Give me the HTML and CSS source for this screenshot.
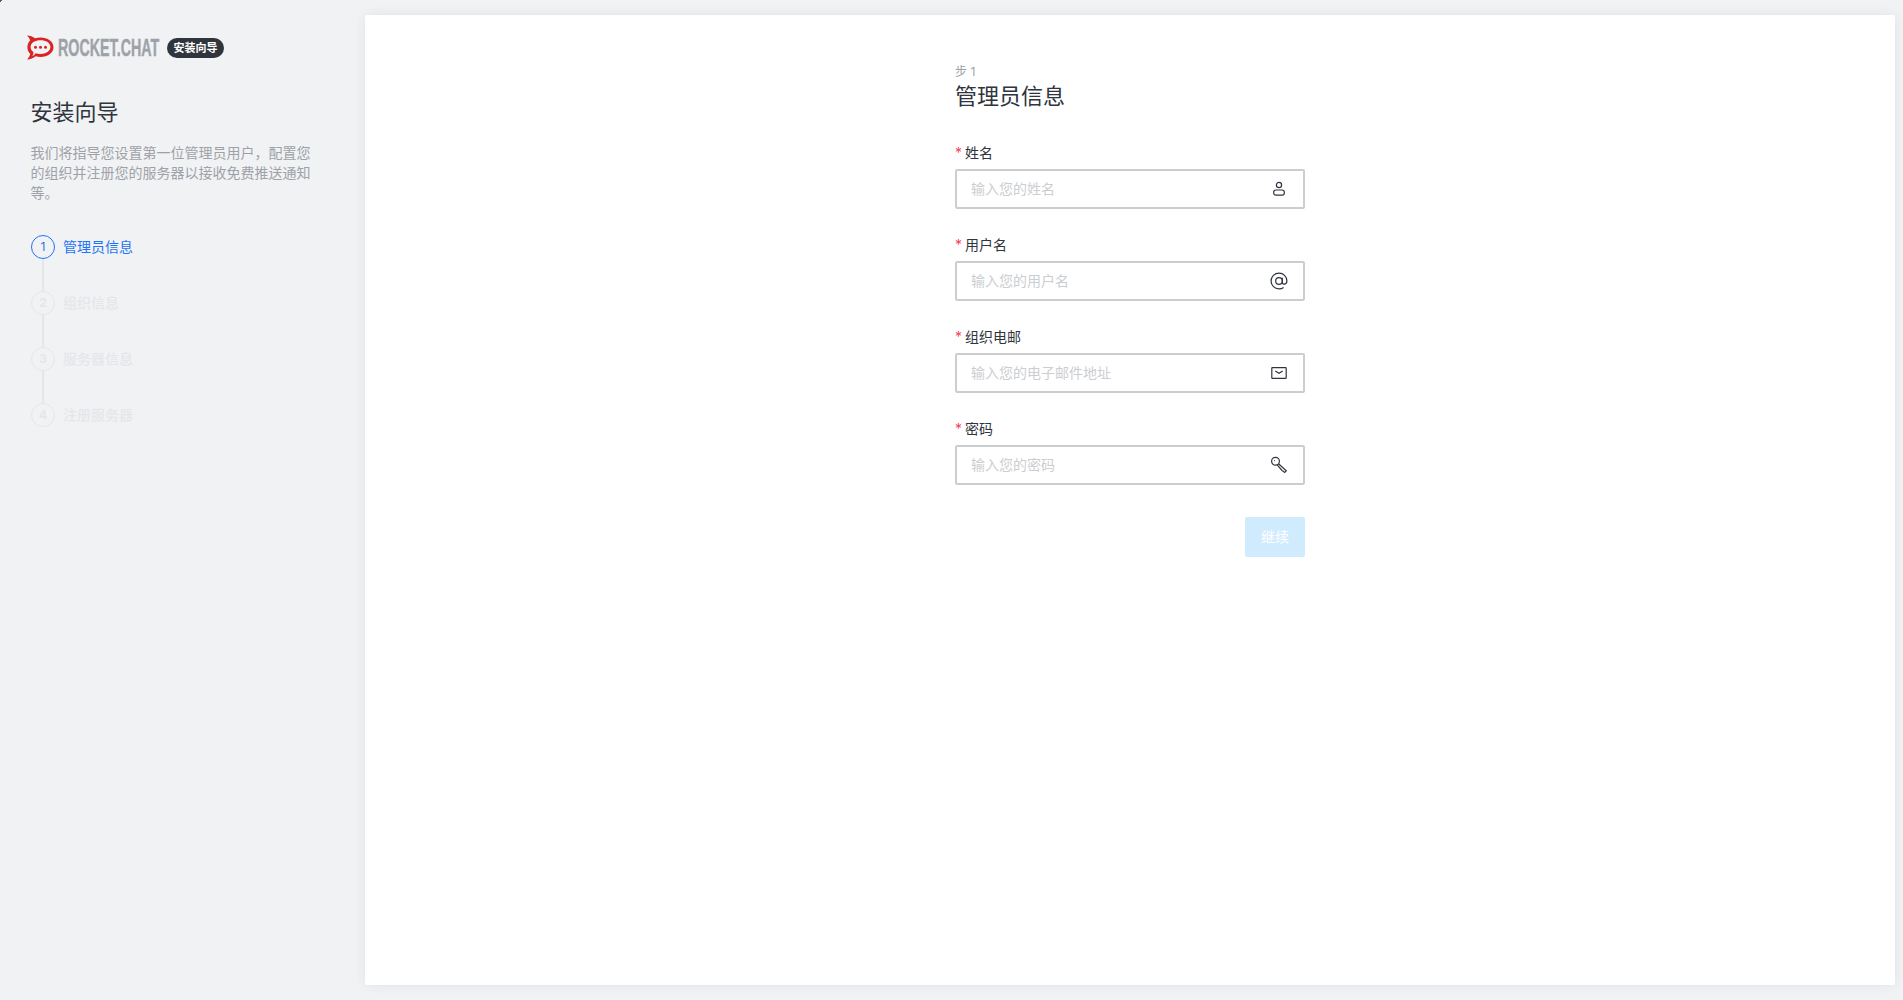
FILE: index.html
```html
<!DOCTYPE html>
<html lang="zh-CN">
<head>
<meta charset="utf-8">
<title>安装向导</title>
<link rel="stylesheet" href="styles.css">
</head>
<body>
<aside class="sidebar">
  <div class="brand">
    <svg class="logo-mark" viewBox="0 0 28 25" width="28" height="25" aria-hidden="true">
      <path class="logo-red" fill-rule="evenodd" d="M1 .5C4 .6 7 1.600 9 3.300 10.800 2.700 12.600 2.400 14.500 2.400 21.500 2.400 27.500 6.300 27.500 12.200 27.500 18 21.500 21.900 14.500 21.900 12.800 21.900 11.200 21.700 9.700 21.200 7.500 23 4.500 24.300 1 24.500 2.600 22.700 4 20.800 4.200 18.700 2.300 17 1.400 14.800 1.400 12.200 1.400 9.500 2.400 7.300 4.200 5.600 3.900 4 2.700 2.100 1 .5ZM14.500 5.300C9 5.300 4.600 8 4.600 12.100 4.600 14.400 5.800 16 7.500 17.200 7.500 18.600 7 20 6.300 21 7.500 20.600 8.600 19.600 9.600 18.200 11 18.700 12.700 19 14.500 19 20 19 24.400 16.200 24.400 12.100 24.400 8 20 5.300 14.500 5.300Z"/>
      <circle class="logo-red" cx="9.500" cy="12.200" r="1.500"/>
      <circle class="logo-red" cx="14.500" cy="12.200" r="1.500"/>
      <circle class="logo-red" cx="19.500" cy="12.200" r="1.500"/>
    </svg>
    <span class="wordmark"><span class="wordmark-text">ROCKET.CHAT</span></span>
    <span class="badge">安装向导</span>
  </div>
  <div class="intro">
    <h1 class="intro-title">安装向导</h1>
    <p class="intro-text">我们将指导您设置第一位管理员用户，配置您的组织并注册您的服务器以接收免费推送通知等。</p>
  </div>
  <ol class="steps">
    <li class="step step-active"><span class="step-num">1</span><span class="step-label">管理员信息</span></li>
    <li class="step"><span class="step-num">2</span><span class="step-label">组织信息</span></li>
    <li class="step"><span class="step-num">3</span><span class="step-label">服务器信息</span></li>
    <li class="step"><span class="step-num">4</span><span class="step-label">注册服务器</span></li>
  </ol>
</aside>
<main class="card">
  <form class="form">
    <div class="form-step">步 1</div>
    <h2 class="form-title">管理员信息</h2>
    <div class="field">
      <label class="field-label"><span class="req">*</span>姓名</label>
      <div class="input-box">
        <input class="input" type="text" placeholder="输入您的姓名">
        <svg class="icon" viewBox="0 0 20 20" width="20" height="20" aria-hidden="true"><circle cx="10" cy="6" r="2.600"/><rect x="4.700" y="11" width="10.600" height="5.200" rx="2.100"/></svg>
      </div>
    </div>
    <div class="field">
      <label class="field-label"><span class="req">*</span>用户名</label>
      <div class="input-box">
        <input class="input" type="text" placeholder="输入您的用户名">
        <svg class="icon" viewBox="0 0 20 20" width="20" height="20" aria-hidden="true"><circle cx="10" cy="10" r="3.300"/><path d="M13.300 6.700V11.200C13.300 14 17.900 14 17.900 10 17.900 5.500 14.300 2.100 10 2.100A7.900 7.900 0 0 0 10 17.900C11.800 17.900 13.300 17.400 14.600 16.500"/></svg>
      </div>
    </div>
    <div class="field">
      <label class="field-label"><span class="req">*</span>组织电邮</label>
      <div class="input-box">
        <input class="input" type="text" placeholder="输入您的电子邮件地址">
        <svg class="icon" viewBox="0 0 20 20" width="20" height="20" aria-hidden="true"><rect x="2.800" y="4.700" width="14.400" height="10.600" rx=".6"/><path d="M6.300 8 10 10.300 13.700 8"/></svg>
      </div>
    </div>
    <div class="field">
      <label class="field-label"><span class="req">*</span>密码</label>
      <div class="input-box">
        <input class="input" type="text" placeholder="输入您的密码">
        <svg class="icon" viewBox="0 0 20 20" width="20" height="20" aria-hidden="true"><circle cx="6.500" cy="6.300" r="3.900"/><path d="M9.500 8.800 17.300 15.800 15.700 17.400 14.200 16.200 13 15.500 8.400 10.200"/><path d="M5.200 5.600H5.900"/></svg>
      </div>
    </div>
    <div class="actions">
      <button class="submit" type="button">继续</button>
    </div>
  </form>
</main>
</body>
</html>
```
FILE: styles.css
```css
* { box-sizing: border-box; }
html, body { height: 100%; }
body {
  margin: 0;
  height: 1000px;
  display: flex;
  overflow: hidden;
  background: #f1f2f4;
  color: #2f343d;
  font-family: Inter, "Noto Sans CJK SC", sans-serif;
  font-size: 14px;
}
body::before {
  content: "";
  position: absolute;
  left: 0;
  top: 0;
  width: 3px;
  height: 3px;
  background: linear-gradient(135deg, #55585e 50%, transparent 50%);
}
.sidebar {
  width: 365px;
  flex: none;
  padding: 35px 0 0 26px;
}
.brand {
  display: flex;
  align-items: center;
  height: 25px;
}
.logo-mark { display: block; flex: none; }
.logo-red { fill: #db2323; }
.wordmark {
  display: block;
  width: 101px;
  margin-left: 4px;
  height: 25px;
  line-height: 25px;
  overflow: visible;
}
.wordmark-text {
  display: inline-block;
  font-family: "Liberation Sans", sans-serif;
  font-weight: 700;
  font-size: 24px;
  color: #9ea2a8;
  white-space: nowrap;
  -webkit-text-stroke: .4px #9ea2a8;
  transform: scaleX(.595);
  transform-origin: left center;
}
.badge {
  margin-left: 8px;
  width: 57px;
  height: 20px;
  border-radius: 10px;
  background: #2f343d;
  color: #fff;
  font-size: 11px;
  font-weight: 700;
  line-height: 20px;
  text-align: center;
  white-space: nowrap;
}
.intro {
  margin-top: 36px;
  padding-left: 4.500px;
  width: 290px;
}
.intro-title {
  margin: 0;
  font-size: 22px;
  line-height: 32px;
  font-weight: 400;
  color: #2f343d;
}
.intro-text {
  margin: 15px 0 0;
  line-height: 20px;
  color: #9ea2a8;
  width: 284px;
}
.steps {
  list-style: none;
  margin: 32px 0 0;
  padding: 0 0 0 5px;
}
.step {
  position: relative;
  display: flex;
  align-items: center;
  gap: 8px;
  height: 24px;
  margin-bottom: 32px;
  color: #e4e7ea;
  font-weight: 500;
}
.step:not(:last-child)::after {
  content: "";
  position: absolute;
  left: 11px;
  top: 24px;
  width: 2px;
  height: 32px;
  background: #e4e7ea;
}
.step-num {
  width: 24px;
  height: 24px;
  border-radius: 50%;
  border: 1px solid #e4e7ea;
  font-size: 12px;
  font-weight: 700;
  line-height: 22px;
  text-align: center;
  flex: none;
}
.step-label { padding-bottom: 2px; }
.step-active { color: #1d74f5; font-weight: 400; }
.step-active .step-num { border-color: #1d74f5; font-weight: 400; }
.card {
  flex: 1;
  margin: 15px 8px 15px 0;
  background: #fff;
  border-radius: 2px;
  box-shadow: 0 0 12px rgba(47, 52, 61, .08);
  display: flex;
  justify-content: center;
}
.form {
  width: 350px;
  padding-top: 49px;
}
.form-step {
  font-size: 12px;
  line-height: 16px;
  color: #9ea2a8;
}
.form-title {
  margin: 0 0 31px;
  font-size: 22px;
  line-height: 32px;
  font-weight: 400;
  color: #2f343d;
}
.field { margin-bottom: 26px; }
.field-label {
  display: block;
  height: 20px;
  line-height: 20px;
  margin-bottom: 6px;
  color: #2f343d;
}
.req {
  display: inline-block;
  width: 10px;
  color: #f5455c;
}
.input-box {
  display: flex;
  align-items: center;
  height: 40px;
  border: 2px solid #cbced1;
  border-radius: 2px;
  padding: 0 14px;
  background: #fff;
}
.input {
  flex: 1;
  min-width: 0;
  border: 0;
  outline: 0;
  padding: 0 0 2px;
  background: transparent;
  font: inherit;
  color: #2f343d;
}
.input::placeholder { color: #cbced1; opacity: 1; }
.icon {
  flex: none;
  fill: none;
  stroke: #2f343d;
  stroke-width: 1.200;
}
.actions {
  display: flex;
  justify-content: flex-end;
  margin-top: 32px;
}
.submit {
  width: 60px;
  height: 40px;
  border: 0;
  border-radius: 2px;
  background: #d1ebfe;
  color: #fff;
  font: inherit;
  padding: 0 0 2px;
}
```
